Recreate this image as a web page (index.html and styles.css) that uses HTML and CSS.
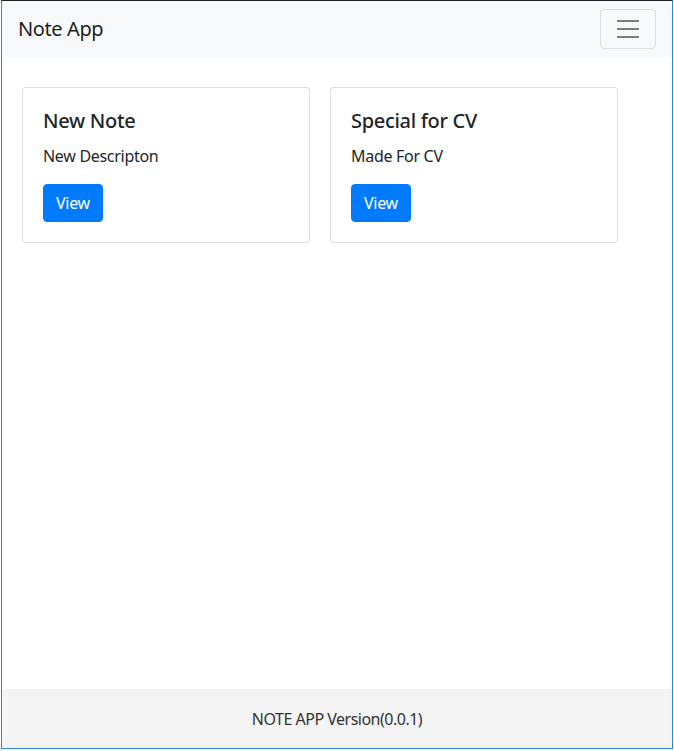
FILE: index.html
```html
<!DOCTYPE html>
<html lang="en">
<head>
<meta charset="utf-8">
<title>Note App</title>
<link rel="stylesheet" href="styles.css">
</head>
<body>
<div class="window">
  <nav class="navbar">
    <span class="brand">Note App</span>
    <button class="toggler" type="button" aria-label="Toggle navigation">
      <svg class="toggler-icon" width="30" height="30" viewBox="0 0 30 30" xmlns="http://www.w3.org/2000/svg">
        <path d="M4 7h22M4 15h22M4 23h22" stroke="rgba(0,0,0,0.5)" stroke-width="2" stroke-linecap="butt" fill="none"/>
      </svg>
    </button>
  </nav>
  <main class="content">
    <div class="cards">
      <div class="card">
        <h5 class="card-title">New Note</h5>
        <p class="card-text">New Descripton</p>
        <a class="btn">View</a>
      </div>
      <div class="card">
        <h5 class="card-title">Special for CV</h5>
        <p class="card-text">Made For CV</p>
        <a class="btn">View</a>
      </div>
    </div>
  </main>
  <footer class="footer">NOTE APP Version(0.0.1)</footer>
</div>
</body>
</html>
```
FILE: styles.css
```css
* { box-sizing: border-box; }
html, body { margin: 0; padding: 0; background: #ffffff; }
body {
  font-family: "Noto Sans", "Open Sans", sans-serif;
  color: #212529;
  font-size: 16px;
  line-height: 1.5;
  letter-spacing: -0.3px;
}
.window {
  margin-left: 1px;
  width: 672px;
  height: 749px;
  border: 1px solid #2b88d8;
  border-top-color: #1f1f1f;
  display: flex;
  flex-direction: column;
  overflow: hidden;
}
.navbar {
  background: #f8f9fa;
  padding: 8px 16px 8px 16px;
  display: flex;
  align-items: center;
  justify-content: space-between;
  height: 56px;
}
.brand {
  font-size: 20px;
  line-height: 30px;
  color: rgba(0,0,0,0.9);
  letter-spacing: -0.4px;
}
.toggler {
  width: 56px;
  height: 40px;
  padding: 4px 12px;
  background: transparent;
  border: 1px solid rgba(0,0,0,0.1);
  border-radius: 4px;
  display: flex;
  align-items: center;
  justify-content: center;
}
.toggler-icon { display: block; }
.content {
  flex: 1;
  padding: 30px 20px 0 20px;
}
.cards {
  display: flex;
  gap: 20px;
}
.card {
  width: 288px;
  border: 1px solid rgba(0,0,0,0.125);
  border-radius: 4px;
  padding: 20px;
  background: #fff;
}
.card-title {
  margin: 0 0 10px 0;
  font-size: 20px;
  font-weight: 500;
  line-height: 26px;
}
.card-text {
  margin: 0 0 16px 0;
}
.btn {
  display: inline-block;
  background: #007bff;
  color: #fff;
  border: 1px solid #007bff;
  border-radius: 4px;
  padding: 6px 12px;
  line-height: 24px;
  font-size: 16px;
}
.footer {
  height: 59px;
  background: #f4f4f4;
  display: flex;
  align-items: center;
  justify-content: center;
  color: #333;
  font-size: 16px;
  letter-spacing: -0.5px;
}
```
